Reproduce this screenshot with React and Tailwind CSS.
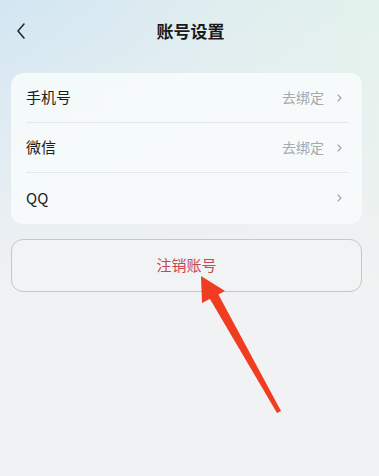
import React from "react";

function Row({ label, right, last }) {
  return (
    <div className="pl-[15px] pr-[13px]">
      <div className={`flex items-center h-[50px] ${last ? "" : "border-b border-[#e3e8ea]"}`}>
        <span className="text-[15px] text-[#1c1c1c] flex-1">{label}</span>
        {right && <span className="text-[14px] text-[#a3a8aa] mr-[13px]">{right}</span>}
        <svg width="5" height="8" viewBox="0 0 5 8" className="mr-[7px]">
          <path d="M1 1 L4 4 L1 7" fill="none" stroke="#9ba0a3" strokeWidth="1.1" strokeLinecap="round" strokeLinejoin="round" />
        </svg>
      </div>
    </div>
  );
}

export default function App() {
  return (
    <div
      className="relative w-[379px] h-[476px] overflow-hidden bg-[linear-gradient(180deg,rgba(242,243,244,0)_0%,#f1f2f3_62%),linear-gradient(90deg,#d2e6f2_0%,#dfedf0_55%,#e3f2ec_100%)]"
      style={{ fontFamily: '"Noto Sans CJK SC", "Noto Sans", sans-serif' }}
    >
      <div className="relative h-[62px] flex items-center justify-center">
        <svg width="12" height="18" viewBox="0 0 12 18" className="absolute left-[15px] top-[22px]">
          <path d="M9 2 L3 9 L9 16" fill="none" stroke="#2a2a2a" strokeWidth="1.6" strokeLinecap="round" strokeLinejoin="round" />
        </svg>
        <span className="text-[17px] font-bold text-[#1a1a1a] ml-[2px]">账号设置</span>
      </div>
      <div className="ml-[11px] mr-[17px] mt-[11px] rounded-[12px] bg-[rgba(248,251,251,0.85)] pb-[1px]">
        <Row label="手机号" right="去绑定" />
        <Row label="微信" right="去绑定" />
        <Row label="QQ" last />
      </div>
      <div className="ml-[11px] mr-[17px] mt-[15px] h-[53px] rounded-[12px] border border-[#c4c6c8] flex items-center justify-center bg-[#f2f3f4]">
        <span className="text-[15px] text-[#c9464f]">注销账号</span>
      </div>
      <svg className="absolute left-0 top-0" width="379" height="476" viewBox="0 0 379 476">
        <polygon points="201,276 202,303 225,291" fill="#f03d22" />
        <polygon points="207,294 216,290 281,411 277,413" fill="#f03d22" />
      </svg>
    </div>
  );
}
